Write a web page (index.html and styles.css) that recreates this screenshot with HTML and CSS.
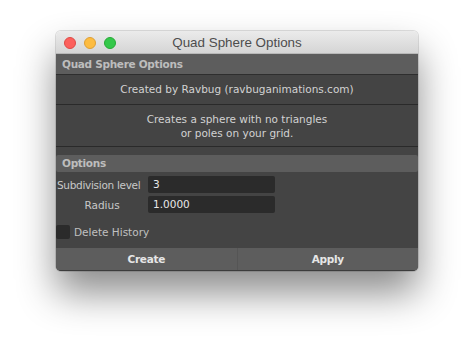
FILE: index.html
```html
<!DOCTYPE html>
<html>
<head>
<meta charset="utf-8">
<link rel="stylesheet" href="styles.css">
</head>
<body>
<div class="window">
  <div class="titlebar">
    <div class="lights">
      <span class="light red"></span>
      <span class="light yellow"></span>
      <span class="light green"></span>
    </div>
    <div class="title">Quad Sphere Options</div>
  </div>
  <div class="content">
    <div class="frame-head">Quad Sphere Options</div>
    <div class="credit">Created by Ravbug (ravbuganimations.com)</div>
    <div class="desc">Creates a sphere with no triangles<br>or poles on your grid.</div>
    <div class="opt-head">Options</div>
    <div class="fields">
      <div class="row">
        <span class="label label-left">Subdivision level</span>
        <span class="field">3</span>
      </div>
      <div class="row">
        <span class="label">Radius</span>
        <span class="field">1.0000</span>
      </div>
    </div>
    <div class="check-row">
      <span class="box"></span>
      <span class="check-label">Delete History</span>
    </div>
    <div class="buttons">
      <div class="btn">Create</div>
      <div class="btn">Apply</div>
    </div>
  </div>
</div>
</body>
</html>
```
FILE: styles.css
```css
html, body {
  margin: 0;
  padding: 0;
  background: #ffffff;
}
body {
  width: 474px;
  height: 352px;
  overflow: hidden;
  font-family: "DejaVu Sans", "Liberation Sans", sans-serif;
}
.window {
  margin: 31px 0 0 56px;
  width: 362px;
  border-radius: 5px;
  overflow: hidden;
  box-shadow: 0 22px 38px rgba(0,0,0,0.45), 0 0 0 1px rgba(0,0,0,0.12);
}
.titlebar {
  height: 23px;
  background: linear-gradient(#ebebeb, #d5d5d5);
  border-bottom: 1px solid #b8b8b8;
  box-sizing: border-box;
  display: flex;
  align-items: center;
  position: relative;
}
.lights {
  display: flex;
  gap: 8px;
  padding-left: 8px;
  padding-top: 1px;
}
.light {
  width: 12px;
  height: 12px;
  border-radius: 50%;
  box-sizing: border-box;
}
.red { background: #fc605c; border: 0.5px solid #de4a45; }
.yellow { background: #fdbc40; border: 0.5px solid #de9f34; }
.green { background: #34c84a; border: 0.5px solid #27aa35; }
.title {
  position: absolute;
  left: 0;
  right: 0;
  top: 4px;
  text-align: center;
  font-family: "Liberation Sans", sans-serif;
  font-size: 13.4px;
  color: #4d4d4d;
}
.content {
  background: #444444;
  color: #d2d2d2;
  font-size: 10.5px;
}
.frame-head {
  height: 20px;
  line-height: 20px;
  background: #5d5d5d;
  border-bottom: 1px solid #2e2e2e;
  padding-left: 6px;
  font-weight: bold;
  color: #bdbdbd;
  letter-spacing: -0.3px;
}
.credit {
  height: 29px;
  line-height: 29px;
  text-align: center;
  border-bottom: 1px solid #2a2a2a;
}
.desc {
  height: 42px;
  box-sizing: border-box;
  padding-top: 7px;
  line-height: 14px;
  text-align: center;
  border-bottom: 1px solid #2a2a2a;
}
.opt-head {
  margin-top: 8px;
  height: 17px;
  line-height: 17px;
  background: #5d5d5d;
  border-radius: 2px;
  padding-left: 6px;
  font-weight: bold;
  color: #bdbdbd;
  letter-spacing: -0.3px;
}
.fields {
  padding-top: 4px;
  display: flex;
  flex-direction: column;
  gap: 3px;
}
.row {
  display: flex;
  align-items: center;
  height: 17px;
}
.label {
  width: 92px;
  flex-shrink: 0;
  text-align: center;
  color: #c8c8c8;
  white-space: nowrap;
}
.label-left {
  text-align: left;
  padding-left: 1px;
  width: 91px;
  letter-spacing: -0.3px;
}
.field {
  width: 127px;
  height: 17px;
  line-height: 17px;
  background: #2b2b2b;
  border-radius: 2px;
  padding-left: 5px;
  box-sizing: border-box;
  color: #e8e8e8;
}
.check-row {
  display: flex;
  align-items: center;
  gap: 4px;
  margin-top: 12px;
  height: 14px;
}
.box {
  width: 14px;
  height: 14px;
  background: #2b2b2b;
  border-radius: 2px;
}
.check-label {
  color: #c0c0c0;
}
.buttons {
  margin-top: 9px;
  display: flex;
  gap: 1px;
  background: #555555;
  border-bottom: 1px solid #3c3c3c;
}
.btn {
  flex: 1;
  height: 22px;
  line-height: 22px;
  text-align: center;
  background: #5d5d5d;
  color: #e6e6e6;
  font-weight: bold;
  letter-spacing: -0.3px;
}
```
